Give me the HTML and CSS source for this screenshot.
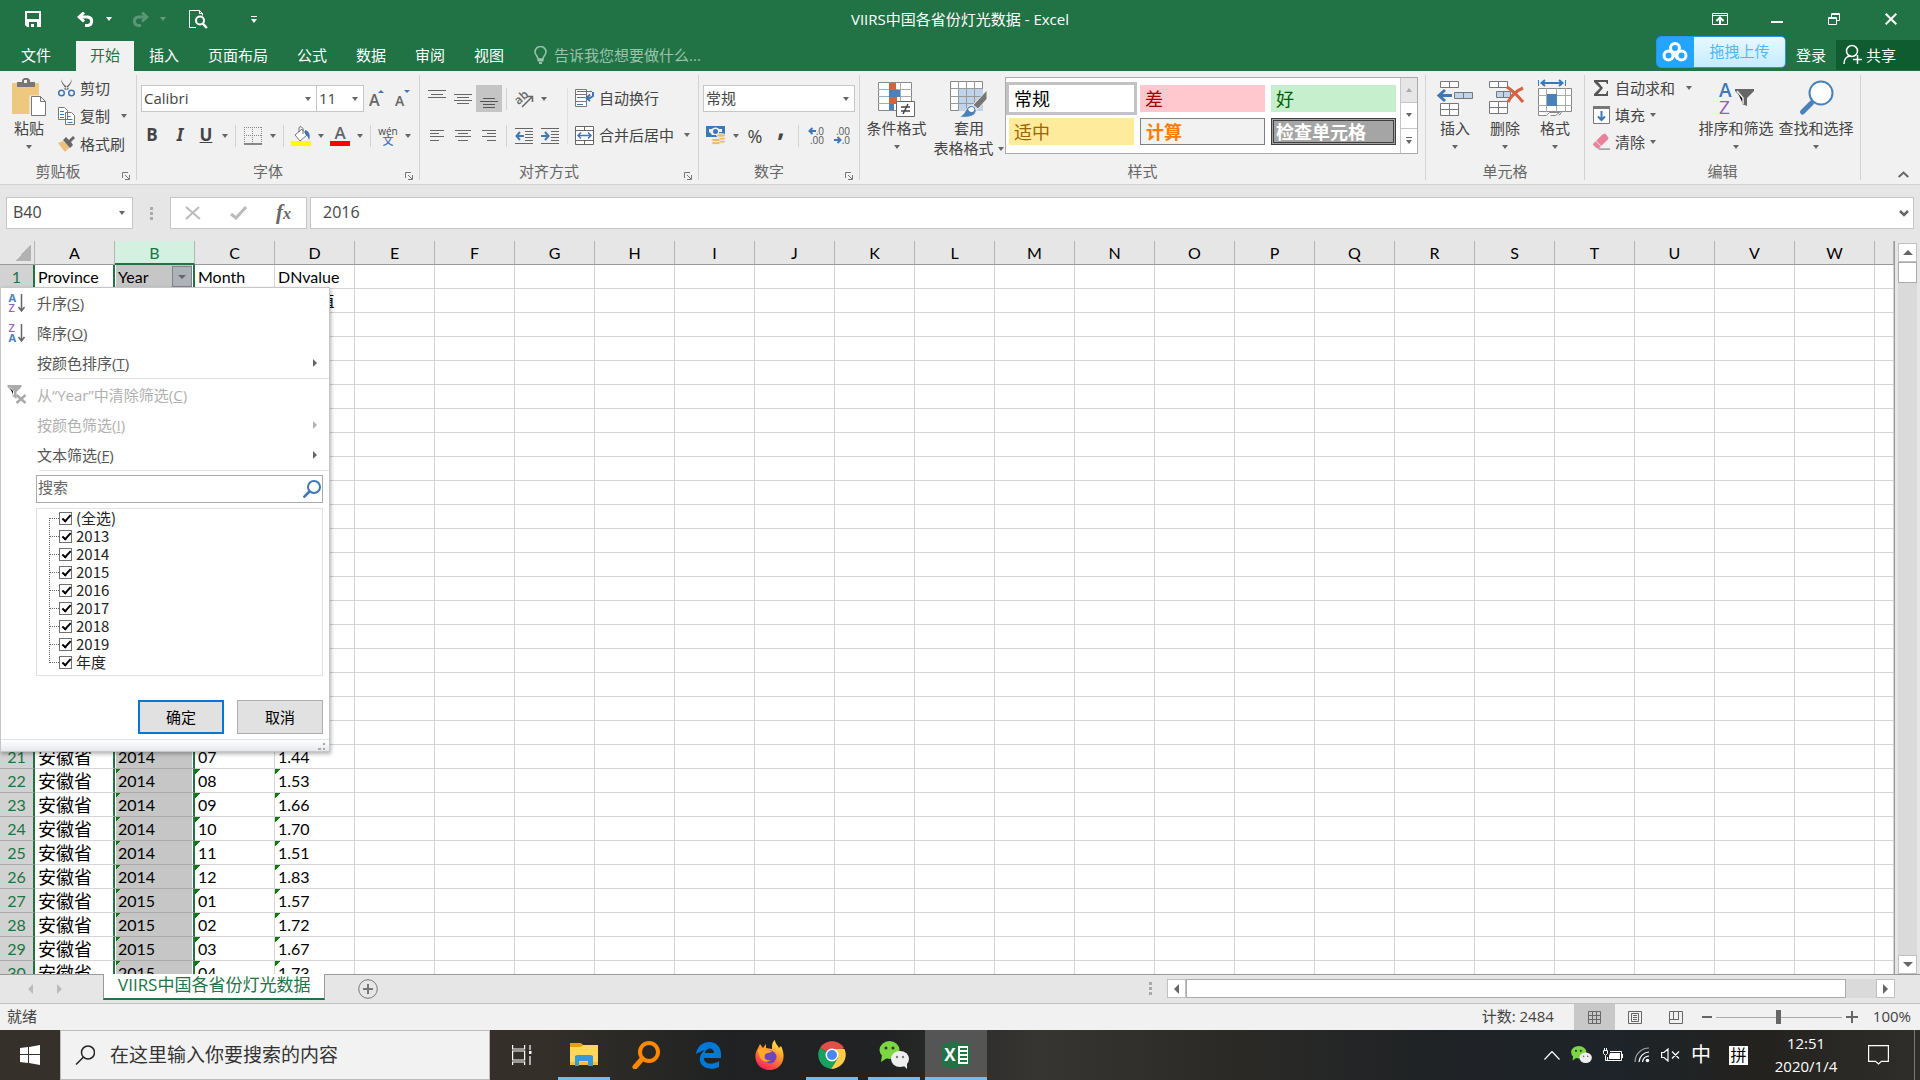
FILE: index.html
```html
<!DOCTYPE html>
<html lang="zh-CN">
<head>
    <meta charset="UTF-8">
    <meta name="viewport" content="width=device-width, initial-scale=1.0">
    <title>VIIRS中国各省份灯光数据 - Excel</title>
    <link rel="stylesheet" href="styles.css">
</head>
<body>
    <header class="app-header">
        <div class="title-bar">
            <div class="quick-access">
                <button class="qa-save" aria-label="保存"><svg width="16" height="16" viewBox="0 0 16 16"><path fill="#fff" fill-rule="evenodd" d="M0 0h16v16H2l-2-2zM2 2v6h12V2zM4 11v5h2v-3h3v3h3v-5z"/></svg></button>
                <button class="qa-undo" aria-label="撤消"><svg width="18" height="15" viewBox="0 0 18 15"><path fill="none" stroke="#fff" stroke-width="3" d="M2 5h9a4.300 4.300 0 0 1 0 8.500H8"/><path fill="none" stroke="#fff" stroke-width="3" d="M7 0.500 2.200 5 7 9.500"/></svg></button>
                <i class="caret light"></i>
                <button class="qa-redo" aria-label="恢复"><svg width="18" height="15" viewBox="0 0 18 15"><path fill="none" stroke="#fff" stroke-width="3" d="M16 5H7a4.300 4.300 0 0 0 0 8.500h3"/><path fill="none" stroke="#fff" stroke-width="3" d="M11 0.500 15.800 5 11 9.500"/></svg></button>
                <i class="caret light faded"></i>
                <button class="qa-preview" aria-label="打印预览"><svg width="19" height="19" viewBox="0 0 19 19"><path fill="none" stroke="#fff" d="M7 17.500H.5V.5h10l3 3v2M10.500.5v3h3"/><circle cx="11" cy="10.500" r="4" fill="none" stroke="#fff" stroke-width="2"/><path stroke="#fff" stroke-width="2.500" d="m13.800 13.500 4 4.500"/></svg></button>
                <button class="qa-more" aria-label="自定义快速访问工具栏"><svg width="6" height="7" viewBox="0 0 6 7"><path fill="#fff" d="M0 0h6v1H0zM0 3h6L3 7z"/></svg></button>
            </div>
            <h1 class="doc-title">VIIRS中国各省份灯光数据 - Excel</h1>
            <div class="window-buttons">
                <button aria-label="功能区显示选项"><svg width="16" height="12" viewBox="0 0 16 12"><path fill="none" stroke="#fff" d="M.5.5h15v11H.5zM.5 2.500h15"/><path fill="none" stroke="#fff" stroke-width="2" d="M8 11V5M4.500 8 8 4.500 11.500 8"/></svg></button>
                <button aria-label="最小化"><svg width="12" height="12" viewBox="0 0 12 12"><path fill="#fff" d="M0 8h12v2H0z"/></svg></button>
                <button aria-label="向下还原"><svg width="12" height="12" viewBox="0 0 12 12"><path fill="none" stroke="#fff" d="M.5 4.500h8v7h-8zM.5 5.500h8M3.500 4V.5h8v7H9M3.500 1.500h8"/></svg></button>
                <button aria-label="关闭"><svg width="12" height="12" viewBox="0 0 12 12"><path stroke="#fff" stroke-width="2" d="m.7.7 10.600 10.600M11.300.7.7 11.300"/></svg></button>
            </div>
        </div>
        <div class="tab-bar">
            <nav class="ribbon-tabs">
                <button class="file-tab">文件</button>
                <button class="active">开始</button>
                <button>插入</button>
                <button>页面布局</button>
                <button>公式</button>
                <button>数据</button>
                <button>审阅</button>
                <button>视图</button>
            </nav>
            <button class="tell-me"><svg width="13" height="18" viewBox="0 0 13 18"><path fill="none" stroke="#9bc3ab" stroke-width="1.500" d="M4 13c0-3-3-4-3-7a5.500 5.500 0 0 1 11 0c0 3-3 4-3 7z"/><path fill="#9bc3ab" d="M3.500 13h6v2.500h-6zM5 16h3v2H5z"/></svg>告诉我您想要做什么...</button>
            <button class="upload"><span class="upload-logo"><svg width="26" height="20" viewBox="0 0 26 20"><g fill="none" stroke="#fff" stroke-width="3"><circle cx="13" cy="6" r="4.500"/><circle cx="6.500" cy="13.500" r="4.500"/><circle cx="19.500" cy="13.500" r="4.500"/><path d="m10 10 6 7"/></g></svg></span><span class="upload-text">拖拽上传</span></button>
            <a class="login" href="#">登录</a>
            <button class="share"><svg width="20" height="21" viewBox="0 0 20 21"><g fill="none" stroke="#fff" stroke-width="1.500"><circle cx="9" cy="7" r="5.500"/><path d="M1 20c0-5 3-8 7-8M14.500 11v9M10 15.500h9"/></g></svg>共享</button>
        </div>
    </header>

    <section class="ribbon">
        <div class="group clipboard">
            <div class="group-body">
                <button class="big">
                    <svg width="36" height="40" viewBox="0 0 36 40"><path fill="#edc87e" d="M1 5h27v31H1z"/><path fill="#777" d="M6 9V4h5V2l2-2h4l2 2v2h5v5z"/><path fill="#f1f1f1" d="M13 2h3v3h-3z"/><path fill="#fff" stroke="#f1f1f1" stroke-width="3" d="M20 19h9l6 6v13H20z"/><path fill="#fff" stroke="#777" d="M20.500 18.500h9l5 5v14h-14zM29.500 18.500v5h5"/></svg>
                    <span>粘贴</span><i class="caret"></i>
                </button>
                <div class="stack">
                    <button><svg width="17" height="18" viewBox="0 0 17 18"><path fill="#666" d="M3 0c0 4 3 7 6 11l2-1C8 7 4 4 3 0zM14 0c0 4-3 7-6 11l-2-1c3-3 7-6 8-10z"/><g fill="none" stroke="#3f77b5" stroke-width="1.500"><circle cx="3.500" cy="14" r="2.800"/><circle cx="13.500" cy="14" r="2.800"/></g></svg>剪切</button>
                    <button><svg width="17" height="18" viewBox="0 0 17 18"><path fill="#fff" stroke="#777" d="M.5.5h6l3 3v9h-9zM7.500 5.500h6l3 3v9h-9z"/><path stroke="#3f77b5" d="M2 4.500h4M2 7.500h4M2 10.500h4M9.500 9.500h3M9.500 12.500h5M9.500 15.500h5"/></svg>复制 <i class="caret"></i></button>
                    <button><svg width="17" height="18" viewBox="0 0 17 18"><path fill="#edc07a" d="m0 8 5-2 7 6-5 5z"/><path fill="#666" d="m5 5 3-3 3 3 4-4 2 2-4 4 2 3-3 3z"/></svg>格式刷</button>
                </div>
            </div>
            <div class="group-label">剪贴板<svg class="launcher" width="8" height="8" viewBox="0 0 8 8"><path fill="none" stroke="#777" d="M.5 6V.5H6M3 3l4 4M7.500 3v4.500H3"/></svg></div>
        </div>

        <div class="group font">
            <div class="group-body rows">
                <div class="row">
                    <label class="combo font-name"><select aria-label="字体"><option>Calibri</option></select></label><label class="combo font-size"><select aria-label="字号"><option>11</option></select></label>
                    <button class="tool"><svg width="16" height="20" viewBox="0 0 16 20"><text x="0" y="17" font-size="16" font-weight="600" fill="#666">A</text><path fill="#3f77b5" d="M9 4h6l-3-3z"/></svg></button>
                    <button class="tool"><svg width="16" height="20" viewBox="0 0 16 20"><text x="0" y="17" font-size="14" font-weight="600" fill="#666">A</text><path fill="#3f77b5" d="M9 1h6l-3 3z"/></svg></button>
                </div>
                <div class="row">
                    <button class="tool wide bold">B</button><button class="tool wide italic">I</button><button class="tool slim underline">U</button><i class="caret cell"></i><i class="sep"></i>
                    <button class="tool"><svg width="18" height="18" viewBox="0 0 18 18"><path fill="none" stroke="#888" stroke-dasharray="1 1" d="M.5 0v17M17.500 0v17M8.500 0v17M0 .5h18M0 8.500h18"/><path stroke="#666" stroke-width="1.500" d="M0 17h18"/></svg></button><i class="caret cell"></i><i class="sep"></i>
                    <button class="tool"><svg width="20" height="20" viewBox="0 0 20 20"><path fill="#fff" stroke="#777" d="m4 9 7-6 5 6-7 6z"/><path fill="none" stroke="#777" d="M8 6V1.500L10 .5l2 2V8"/><path fill="#3f77b5" d="M14 4c4 1 6 5 4 10-1-3-2-5-4-6z"/><path fill="#ff0" d="M0 15h20v5H0z"/></svg></button><i class="caret cell"></i>
                    <button class="tool"><svg width="20" height="20" viewBox="0 0 20 20"><text x="10" y="13" text-anchor="middle" font-size="17" font-weight="600" fill="#666">A</text><path fill="#f00" d="M0 15h20v5H0z"/></svg></button><i class="caret cell"></i><i class="sep"></i>
                    <button class="tool phonetic"><span>wén</span><b>文</b></button><i class="caret cell"></i>
                </div>
            </div>
            <div class="group-label">字体<svg class="launcher" width="8" height="8" viewBox="0 0 8 8"><path fill="none" stroke="#777" d="M.5 6V.5H6M3 3l4 4M7.500 3v4.500H3"/></svg></div>
        </div>

        <div class="group align">
            <div class="group-body">
                <div class="rows">
                    <div class="row">
                        <button class="tool"><svg width="18" height="18" viewBox="0 0 18 18"><path stroke="#666" d="M0 .5h18M3 4.500h12M0 7.500h18"/></svg></button><button class="tool"><svg width="18" height="18" viewBox="0 0 18 18"><path stroke="#666" d="M0 4.500h18M3 7.500h12M0 10.500h18M3 13.500h12"/></svg></button><button class="tool pressed"><svg width="18" height="18" viewBox="0 0 18 18"><path stroke="#555" d="M3 8.500h12M0 11.500h18M3 14.500h12M3 17.500h12"/></svg></button><i class="sep"></i>
                        <button class="tool"><svg width="20" height="18" viewBox="0 0 20 18"><text x="1" y="12" font-size="12" font-weight="600" fill="#666" transform="rotate(-42 7 9)">ab</text><path fill="none" stroke="#666" stroke-width="1.500" d="M8 17 18 7M13 6.500h5.500V12"/></svg></button><i class="caret cell"></i>
                    </div>
                    <div class="row">
                        <button class="tool"><svg width="14" height="12" viewBox="0 0 14 12"><path stroke="#666" d="M0 .5h14M0 3.500h9M0 6.500h14M0 10.500h9"/></svg></button><button class="tool"><svg width="16" height="12" viewBox="0 0 16 12"><path stroke="#666" d="M0 .5h16M3 3.500h10M0 6.500h16M3 10.500h10"/></svg></button><button class="tool"><svg width="14" height="12" viewBox="0 0 14 12"><path stroke="#666" d="M0 .5h14M5 3.500h9M0 6.500h14M5 10.500h9"/></svg></button><i class="sep"></i>
                        <button class="tool"><svg width="18" height="16" viewBox="0 0 18 16"><path stroke="#666" d="M0 .5h18M10 3.500h8M10 6.500h8M10 9.500h8M10 12.500h8M0 15.500h18"/><path fill="none" stroke="#3f77b5" stroke-width="2" d="M9 8H1.500M5 4 1.500 8 5 12"/></svg></button><button class="tool"><svg width="18" height="16" viewBox="0 0 18 16"><path stroke="#666" d="M0 .5h18M10 3.500h8M10 6.500h8M10 9.500h8M10 12.500h8M0 15.500h18"/><path fill="none" stroke="#3f77b5" stroke-width="2" d="M0 8h7.500M4 4l3.500 4L4 12"/></svg></button>
                    </div>
                </div>
                <i class="long-sep"></i>
                <div class="rows merge">
                    <button class="row"><svg width="19" height="18" viewBox="0 0 19 18"><path fill="#fff" stroke="#777" d="M.5.5h11v17H.5zM.5 5.500h11M.5 12.500h11"/><path fill="none" stroke="#3f77b5" d="M2 2.500h15M2 8.500h8M2 15.500h6"/><path fill="none" stroke="#3f77b5" stroke-width="2" d="M18 3v4l-3 2h-3M15 5.500 11.500 9l3.500 3"/></svg>自动换行</button>
                    <button class="row"><svg width="19" height="19" viewBox="0 0 19 19"><path fill="#fff" stroke="#666" d="M.5.5h18v18H.5zM.5 4.500h18M.5 14.500h18M9.500.5v4M9.500 14.500v4"/><path fill="none" stroke="#3f77b5" stroke-width="1.500" d="M3 9.500h13M6 6.500l-3 3 3 3M13 6.500l3 3-3 3"/></svg>合并后居中 <i class="caret"></i></button>
                </div>
            </div>
            <div class="group-label">对齐方式<svg class="launcher" width="8" height="8" viewBox="0 0 8 8"><path fill="none" stroke="#777" d="M.5 6V.5H6M3 3l4 4M7.500 3v4.500H3"/></svg></div>
        </div>

        <div class="group number">
            <div class="group-body rows">
                <label class="combo"><select aria-label="数字格式"><option>常规</option></select></label>
                <div class="row">
                    <button class="tool"><svg width="20" height="19" viewBox="0 0 20 19"><path fill="#3f77b5" d="M0 0h19v11H0z"/><path fill="#f1f1f1" d="M3 3h3c2-2 5-2 7 0h3v3h-3v3H6c-1-2-3-3-3-3z"/><circle cx="9.500" cy="5.500" r="2.500" fill="#3f77b5"/><g fill="#edb96a" stroke="#f1f1f1"><ellipse cx="15" cy="15.500" rx="4.500" ry="1.800"/><ellipse cx="15" cy="12.500" rx="4.500" ry="1.800"/><ellipse cx="15" cy="9.500" rx="4.500" ry="1.800"/><ellipse cx="10" cy="17" rx="4.500" ry="1.800"/><ellipse cx="10" cy="14" rx="4.500" ry="1.800"/></g></svg></button><i class="caret cell"></i>
                    <button class="tool percent">%</button><button class="tool comma">,</button><i class="sep"></i>
                    <button class="tool"><svg width="16" height="17" viewBox="0 0 16 17"><path fill="none" stroke="#3f77b5" stroke-width="2" d="M8 4H2M4.500 1 1.500 4l3 3"/><text x="16" y="8" text-anchor="end" font-size="10" fill="#555">.0</text><text x="16" y="17" text-anchor="end" font-size="10" fill="#555">.00</text></svg></button><button class="tool"><svg width="16" height="17" viewBox="0 0 16 17"><text x="16" y="8" text-anchor="end" font-size="10" fill="#555">.00</text><text x="16" y="17" text-anchor="end" font-size="10" fill="#555">.0</text><path fill="none" stroke="#3f77b5" stroke-width="2" d="M0 13h6M3.500 10l3 3-3 3"/></svg></button>
                </div>
            </div>
            <div class="group-label">数字<svg class="launcher" width="8" height="8" viewBox="0 0 8 8"><path fill="none" stroke="#777" d="M.5 6V.5H6M3 3l4 4M7.500 3v4.500H3"/></svg></div>
        </div>

        <div class="group styles">
            <div class="group-body">
                <button class="big cond">
                    <svg width="37" height="40" viewBox="0 0 37 40"><path fill="#fff" stroke="#888" d="M.5 4.500h33v28H.5z"/><path stroke="#aaa" d="M0 11.500h34M0 18.500h34M0 25.500h34M11.500 4v28M22.500 4v28"/><path fill="#d8613f" d="M11 5h7v7h-7zM11 19h8v7h-8z"/><path fill="#4a81b9" d="M11 12h11v7H11zM11 26h5v6h-5z"/><path fill="#fff" stroke="#666" d="M18.500 23.500h18v15h-18z"/><path stroke="#444" stroke-width="1.500" d="M23 29h9M23 33h9M30 26l-5 10"/></svg>
                    <span>条件格式</span><i class="caret"></i>
                </button>
                <button class="big table-format">
                    <svg width="38" height="40" viewBox="0 0 38 40"><path fill="#fff" stroke="#888" d="M.5 3.500h32v29H.5z"/><path fill="#bfd3ea" d="M8 11h25v22H8z"/><path stroke="#999" d="M0 10.500h33M0 18.500h33M0 25.500h33M8.500 3v30M16.500 3v30M24.500 3v30"/><path fill="#777" stroke="#f1f1f1" d="M37 12v9L28 31l-5-4z"/><path fill="#4a81b9" stroke="#f1f1f1" d="M9 39c6-2 6-8 10-11 4-2 8 2 7 6-2 5-9 6-17 5z"/><path fill="#fff" d="M18 31c4-4 7-1 6 2-2 2-5 1-6-2z"/></svg>
                    <span>套用</span><span>表格格式 <i class="caret"></i></span>
                </button>
                <div class="gallery">
                    <div class="gallery-grid">
                        <button class="style-normal">常规</button><button class="style-bad">差</button><button class="style-good">好</button>
                        <button class="style-neutral">适中</button><button class="style-calc">计算</button><button class="style-check">检查单元格</button>
                    </div>
                    <div class="gallery-scroll">
                        <button class="off" aria-label="上一行"><i class="caret up"></i></button>
                        <button aria-label="下一行"><i class="caret"></i></button>
                        <button class="more" aria-label="其他"><i class="caret"></i></button>
                    </div>
                </div>
            </div>
            <div class="group-label">样式</div>
        </div>

        <div class="group cells">
            <div class="group-body">
                <button class="big">
                    <svg width="37" height="40" viewBox="0 0 37 40"><path fill="#fff" stroke="#777" d="M3.500 3.500h18v6h-18zM12.500 3.500v6M3.500 25.500h18v12h-18zM12.500 25.500v12M3.500 31.500h18"/><path fill="#bfd3ea" stroke="#777" d="M17.500 14.500h18v6h-18zM26.500 14.500v6"/><path fill="none" stroke="#3f77b5" stroke-width="3" d="M15 17.500H3M8 12l-6 5.500L8 23"/></svg>
                    <span>插入</span><i class="caret"></i>
                </button>
                <button class="big">
                    <svg width="37" height="40" viewBox="0 0 37 40"><path fill="#fff" stroke="#777" d="M2.500 3.500h18v6h-18zM11.500 3.500v6M2.500 23.500h18v12h-18zM11.500 23.500v12M2.500 29.500h18"/><path fill="#bfd3ea" stroke="#777" d="M9.500 13.500h14v6h-14zM16.500 13.500v6"/><path fill="none" stroke="#d8613f" stroke-width="3" d="M20 9c5 3 10 8 16 15M36 10c-7 3-12 8-15 14"/></svg>
                    <span>删除</span><i class="caret"></i>
                </button>
                <button class="big">
                    <svg width="37" height="40" viewBox="0 0 37 40"><path fill="#fff" stroke="#888" d="M1.500 10.500h33v23h-33z"/><path stroke="#aaa" d="M1 17.500h34M1 27.500h34M9.500 10v24M19.500 10v24M28.500 10v24"/><path fill="#4a81b9" d="M10 16h10v12H10z"/><path fill="#fff" stroke="#888" d="M1.500 33.500v4h8l3-3h10l-4 3h-5M22 37.500l3-4"/><path fill="none" stroke="#3f77b5" d="M1.500 2v6M28.500 2v6"/><path fill="none" stroke="#3f77b5" stroke-width="2" d="M5 5h20M8 2 4.500 5 8 8M22 2l3.500 3L22 8"/></svg>
                    <span>格式</span><i class="caret"></i>
                </button>
            </div>
            <div class="group-label">单元格</div>
        </div>

        <div class="group editing">
            <div class="group-body">
                <div class="stack">
                    <button><svg width="17" height="18" viewBox="0 0 17 18"><path fill="#555" d="M1 1h14v4h-1l-1-2H5l5 6-5 6h8l1-3h1v5H1v-2l6-6-6-6z"/></svg>自动求和 <i class="caret"></i></button>
                    <button><svg width="17" height="18" viewBox="0 0 17 18"><path fill="#fff" stroke="#777" d="M.5.5h16v17H.5z"/><path fill="#777" d="M0 0h17v3H0z"/><path fill="none" stroke="#3f77b5" stroke-width="2" d="M8.500 5v9M5 10.500 8.500 14 12 10.500"/></svg>填充<i class="caret"></i></button>
                    <button><svg width="18" height="18" viewBox="0 0 18 18"><path fill="#e8839b" d="M0 11 10 1l3-1 3 4v2L6 16H4l-4-4z"/><path stroke="#f1f1f1" d="m3 8 6 6"/><path stroke="#666" d="M6 16.500h12"/></svg>清除<i class="caret"></i></button>
                </div>
                <button class="big find">
                    <svg width="37" height="40" viewBox="0 0 37 40"><text x="1" y="19" font-size="19" font-weight="600" fill="#3f77b5">A</text><text x="1" y="36" font-size="19" font-weight="500" fill="#955fb5">Z</text><path fill="#666" d="M17 11h19v2l-7 7v8l-5-2v-6l-7-7z"/><path stroke="#f1f1f1" stroke-width="1.500" d="m19 13 6 7v6"/></svg>
                    <span>排序和筛选</span><i class="caret"></i>
                </button>
                <button class="big find">
                    <svg width="37" height="40" viewBox="0 0 37 40"><circle cx="23" cy="15" r="11.500" fill="#fff" stroke="#4a81b9" stroke-width="2"/><path stroke="#4a81b9" stroke-width="5" stroke-linecap="round" d="m13.500 25-9 9"/></svg>
                    <span>查找和选择</span><i class="caret"></i>
                </button>
            </div>
            <div class="group-label">编辑</div>
        </div>
        <button class="collapse" aria-label="折叠功能区"><svg width="11" height="7" viewBox="0 0 11 7"><path fill="none" stroke="#666" stroke-width="2" d="M.7 6 5.500 1.500 10.300 6"/></svg></button>
    </section>

    <section class="formula-bar">
        <label class="combo name-box"><input type="text" value="B40" aria-label="名称框"></label>
        <i class="dots"></i>
        <div class="formula-actions">
            <button aria-label="取消输入"><svg width="16" height="14" viewBox="0 0 16 14"><path stroke="#bbb" stroke-width="2" d="m1 1 14 12M14 1 1 13"/></svg></button>
            <button aria-label="输入"><svg width="18" height="14" viewBox="0 0 18 14"><path fill="none" stroke="#bbb" stroke-width="3" d="m1 8 5 4L16 1"/></svg></button>
            <button class="fx" aria-label="插入函数">f<small>x</small></button>
        </div>
        <div class="formula-field">
            <input type="text" value="2016" aria-label="编辑栏">
            <svg width="10" height="7" viewBox="0 0 10 7"><path fill="none" stroke="#666" stroke-width="2.500" d="m1 1 4 4 4-4"/></svg>
        </div>
    </section>

    <main class="workspace">
        <div class="grid">
            <table id="sheet">
                <colgroup><col class="num-col"></colgroup>
                <thead><tr></tr></thead>
                <tbody></tbody>
            </table>
        </div>
        <div class="v-scroll">
            <button aria-label="向上滚动"><i class="caret up big-caret"></i></button>
            <span class="thumb"></span>
            <button class="end" aria-label="向下滚动"><i class="caret big-caret"></i></button>
        </div>

        <form class="filter-menu">
            <button type="button" class="item"><svg width="17" height="20" viewBox="0 0 17 20"><text x="0" y="9" font-size="11" font-weight="700" fill="#4a81b9">A</text><text x="0" y="19" font-size="11" font-weight="600" fill="#955fb5">Z</text><path fill="none" stroke="#666" stroke-width="1.500" d="M13 1v17M10 14l3 4 3-4"/></svg><span>升序(<u>S</u>)</span></button>
            <button type="button" class="item"><svg width="17" height="20" viewBox="0 0 17 20"><text x="0" y="9" font-size="11" font-weight="600" fill="#955fb5">Z</text><text x="0" y="19" font-size="11" font-weight="700" fill="#4a81b9">A</text><path fill="none" stroke="#666" stroke-width="1.500" d="M13 1v17M10 14l3 4 3-4"/></svg><span>降序(<u>O</u>)</span></button>
            <button type="button" class="item sub"><span>按颜色排序(<u>T</u>)</span></button>
            <hr>
            <button type="button" class="item" disabled><svg width="19" height="19" viewBox="0 0 19 19"><path fill="#aaa" d="M0 0h14v2L9 7v7l-4-3V7L0 2z"/><path stroke="#fff" d="m2 2 4 4v4"/><path stroke="#aaa" stroke-width="2.500" d="m9 10 9 8M18 10l-9 8"/></svg><span>从“Year”中清除筛选(<u>C</u>)</span></button>
            <button type="button" class="item sub" disabled><span>按颜色筛选(<u>I</u>)</span></button>
            <button type="button" class="item sub"><span>文本筛选(<u>F</u>)</span></button>
            <hr>
            <label class="filter-search">
                <input type="text" placeholder="搜索" aria-label="搜索">
                <svg width="18" height="18" viewBox="0 0 18 18"><circle cx="11" cy="7" r="6" fill="none" stroke="#3f77b5" stroke-width="2"/><path stroke="#3f77b5" stroke-width="2.500" d="m6.500 11.500-6 6"/></svg>
            </label>
            <ul class="filter-values">
                <li><label><input type="checkbox" checked>(全选)</label></li>
                <li><label><input type="checkbox" checked>2013</label></li>
                <li><label><input type="checkbox" checked>2014</label></li>
                <li><label><input type="checkbox" checked>2015</label></li>
                <li><label><input type="checkbox" checked>2016</label></li>
                <li><label><input type="checkbox" checked>2017</label></li>
                <li><label><input type="checkbox" checked>2018</label></li>
                <li><label><input type="checkbox" checked>2019</label></li>
                <li><label><input type="checkbox" checked>年度</label></li>
            </ul>
            <div class="filter-buttons">
                <button type="button" class="ok">确定</button>
                <button type="button">取消</button>
            </div>
            <div class="resize-bar"><svg width="8" height="8" viewBox="0 0 8 8"><path fill="#aaa" d="M5 0h2v2H5zM0 5h3v2H0zM5 5h2v2H5z"/></svg></div>
        </form>
    </main>

    <section class="sheet-bar">
        <div class="sheet-nav">
            <button aria-label="上一个工作表"><svg width="5" height="10" viewBox="0 0 5 10"><path fill="#bbb" d="M5 0v10L0 5z"/></svg></button>
            <button aria-label="下一个工作表"><svg width="5" height="10" viewBox="0 0 5 10"><path fill="#bbb" d="M0 0v10l5-5z"/></svg></button>
        </div>
        <button class="sheet-tab">VIIRS中国各省份灯光数据</button>
        <button class="add-sheet" aria-label="新工作表"><svg width="20" height="20" viewBox="0 0 20 20"><circle cx="10" cy="10" r="9.300" fill="none" stroke="#777"/><path stroke="#777" stroke-width="2" d="M10 5v10M5 10h10"/></svg></button>
        <i class="dots"></i>
        <div class="h-scroll">
            <button aria-label="向左滚动"><svg width="5" height="10" viewBox="0 0 5 10"><path fill="#666" d="M5 0v10L0 5z"/></svg></button>
            <span class="thumb"></span>
            <button class="end" aria-label="向右滚动"><svg width="5" height="10" viewBox="0 0 5 10"><path fill="#666" d="M0 0v10l5-5z"/></svg></button>
        </div>
    </section>

    <section class="status-bar">
        <span class="ready">就绪</span>
        <span class="count">计数: 2484</span>
        <button class="view active" aria-label="普通"><svg width="13" height="13" viewBox="0 0 13 13"><path fill="none" stroke="#666" d="M.5.5h12v12H.5zM4.500 0v13M8.500 0v13M0 4.500h13M0 8.500h13"/></svg></button>
        <button class="view" aria-label="页面布局"><svg width="14" height="13" viewBox="0 0 14 13"><path fill="none" stroke="#666" d="M.5.5h13v12H.5zM3.500 2.500h7v8h-7zM5 4.500h4M5 6.500h4M5 8.500h4"/></svg></button>
        <button class="view" aria-label="分页预览"><svg width="14" height="13" viewBox="0 0 14 13"><path fill="none" stroke="#666" d="M.5.5h13v12H.5zM4.500 0v8M9.500 0v8M0 8.500h10"/></svg></button>
        <div class="zoom">
            <button aria-label="缩小"><svg width="10" height="12" viewBox="0 0 10 12"><path stroke="#666" stroke-width="2" d="M0 6h10"/></svg></button>
            <input type="range" min="0" max="200" value="100" aria-label="显示比例">
            <button aria-label="放大"><svg width="12" height="12" viewBox="0 0 12 12"><path stroke="#666" stroke-width="2" d="M0 6h12M6 0v12"/></svg></button>
        </div>
        <span class="percent-text">100%</span>
    </section>

    <footer class="taskbar">
        <button class="start" aria-label="开始"><svg width="20" height="20" viewBox="0 0 20 20"><path fill="#fff" d="M0 3l8-1v7H0zM9 2l11-2v9H9zM0 10h8v8l-8-1zM9 10h11v10L9 18z"/></svg></button>
        <label class="task-search">
            <svg width="20" height="20" viewBox="0 0 20 20"><circle cx="13" cy="7.500" r="6.500" fill="none" stroke="#222" stroke-width="1.500"/><path stroke="#222" stroke-width="1.500" d="M8.500 12 1 19.500"/></svg>
            <input type="text" placeholder="在这里输入你要搜索的内容" aria-label="在这里输入你要搜索的内容">
        </label>
        <nav class="task-apps">
            <button aria-label="任务视图"><svg width="20" height="20" viewBox="0 0 20 20"><path fill="none" stroke="#fff" stroke-width="1.200" d="M.6 0v4h12V0M.6 6h12v9H.6zM.6 20v-3h12v3M18 0v5M18 11v9"/><path fill="#fff" d="M17 6h2.500v3H17z"/></svg></button>
            <button class="running" aria-label="文件资源管理器"><svg width="28" height="24" viewBox="0 0 28 24"><path fill="#e2a30c" d="M0 0h11l2 2v6H0z"/><path fill="#ffd55e" d="M0 4h11l2-2h15v20H0z"/><path fill="#f5bd3c" d="M0 19h28v3H0z"/><path fill="#3a95dc" d="M5 23V13l2-1h14l2 1v10h-5v-5H9v5z"/></svg></button>
            <button aria-label="搜索"><svg width="28" height="28" viewBox="0 0 28 28"><circle cx="17" cy="11" r="9" fill="none" stroke="#f80" stroke-width="4"/><path stroke="#f80" stroke-width="5" stroke-linecap="round" d="m10 18-7 8"/></svg></button>
            <button aria-label="Edge"><svg width="25" height="27" viewBox="0 0 25 27"><path fill="#0078d7" d="M0 12C1 4 7 0 13 0c8 0 12 6 12 12v4H8c0 7 9 7 15 3v6c-6 3-12 2-16-1-5-4-4-12 2-16-3 1-6 2-9 4zM9 11h9c0-6-8-6-9 0z"/></svg></button>
            <button aria-label="Firefox"><svg width="30" height="30" viewBox="0 0 30 30"><defs><linearGradient id="flame" x1=".8" y1="0" x2=".3" y2="1"><stop offset="0" stop-color="#fff34f"/><stop offset=".45" stop-color="#ff9328"/><stop offset="1" stop-color="#ff1f59"/></linearGradient></defs><path fill="url(#flame)" d="M3 8 5 4l3 4 3-4v4l6 1c0-4 0-7 3-9 0 4 3 5 4 8l2-2c6 12 1 23-10 24C4 31-4 19 3 8z"/><circle cx="15" cy="17" r="6.500" fill="#7341c8"/><path fill="#ffab25" d="m3 9 5-1 3 2 6 1c-2 3-6 1-7 4-2 5 3 6 6 5-7 5-13-2-13-11z"/></svg></button>
            <button class="running" aria-label="Chrome"><svg width="28" height="28" viewBox="0 0 28 28"><path fill="#df5146" d="M14 14 2 7C7-2 21-2 26 7z"/><path fill="#19a15f" d="M14 14 2 7c-5 9 1 20 11 21l7-11z"/><path fill="#ffcd46" d="M14 8h12.500C31 18 23 28 13 28l7-11z"/><circle cx="14" cy="14" r="6.500" fill="#fff"/><circle cx="14" cy="14" r="5" fill="#4688f1"/></svg></button>
            <button class="running" aria-label="微信"><svg width="30" height="28" viewBox="0 0 30 28"><ellipse cx="10.500" cy="9" rx="10" ry="9" fill="#7bd642"/><path fill="#7bd642" d="m3 14-1 7 6-4z"/><circle cx="7" cy="7" r="1.500" fill="#333"/><circle cx="14" cy="7" r="1.500" fill="#333"/><ellipse cx="21" cy="18" rx="9" ry="8" fill="#eee"/><path fill="#eee" d="m24 24 4 4v-6z"/><circle cx="18" cy="16" r="1.200" fill="#777"/><circle cx="24" cy="16" r="1.200" fill="#777"/></svg></button>
            <button class="running current" aria-label="Excel"><svg width="28" height="28" viewBox="0 0 28 28"><path fill="#fff" stroke="#217346" stroke-width="2" d="M12 4h15v20H12z"/><path stroke="#217346" stroke-width="2" d="M18 8h7M18 12h7M18 16h7M18 20h7"/><path fill="#217346" d="m0 3 16-3v28L0 25z"/><text x="8" y="20" text-anchor="middle" font-size="17" font-weight="700" fill="#fff">X</text></svg></button>
        </nav>
        <div class="tray">
            <svg width="16" height="9" viewBox="0 0 16 9"><path fill="none" stroke="#fff" stroke-width="1.200" d="m.5 8.500 7.500-8 7.500 8"/></svg>
            <svg width="21" height="18" viewBox="0 0 30 26"><ellipse cx="11" cy="9" rx="11" ry="9" fill="#7bd642"/><path fill="#7bd642" d="m3 14-1 7 6-4z"/><circle cx="7" cy="7" r="1.500" fill="#333"/><circle cx="14" cy="7" r="1.500" fill="#333"/><ellipse cx="21" cy="17" rx="9" ry="7.500" fill="#eee"/><circle cx="18" cy="15" r="1.200" fill="#777"/><circle cx="24" cy="15" r="1.200" fill="#777"/></svg>
            <svg width="20" height="14" viewBox="0 0 20 14"><path fill="none" stroke="#fff" d="M7 3.500h11.500v9h-14V9M19.500 6v4M.5 2.500h4v3l-2 2-2-2zM1.500 0v2M3.500 0v2M2.500 8v4.500h3"/><path fill="#fff" d="M7 5h10v6H6V8z"/></svg>
            <svg width="16" height="16" viewBox="0 0 16 16"><g fill="none" stroke="#fff" stroke-width="1.200"><path d="M1 15A14 14 0 0 1 15 1" opacity=".6"/><path d="M5 15A10.500 10.500 0 0 1 15 5M8.500 15A7 7 0 0 1 15 9"/></g><circle cx="13.500" cy="13.500" r="1.800" fill="#fff"/></svg>
            <svg width="19" height="14" viewBox="0 0 19 14"><path fill="none" stroke="#fff" stroke-width="1.200" d="M.6 4.500H3L7 1v12L3 9.500H.6zM11 3.500l7 7M18 3.500l-7 7"/></svg>
            <span class="ime">中</span>
            <span class="pinyin">拼</span>
            <div class="clock"><span>12:51</span><span>2020/1/4</span></div>
            <svg class="notice" width="22" height="20" viewBox="0 0 22 20"><path fill="none" stroke="#fff" stroke-width="1.200" d="M.6.6h19.800v15.800h-7l-2.900 2.500-2.900-2.500h-7z"/></svg>
        </div>
    </footer>
    <script src="sheet.js"></script>
</body>
</html>
```
FILE: styles.css
```css
* {
    box-sizing: border-box;
}

body {
    margin: 0;
    height: 100vh;
    display: flex;
    flex-direction: column;
    overflow: hidden;
    background-color: #e6e6e6;
    color: #444;
    font-family: "Open Sans", "Noto Sans CJK SC", sans-serif;
    font-size: 15px;
    line-height: 20px;
}

button,
input,
select {
    margin: 0;
    padding: 0;
    border: 0;
    border-radius: 0;
    background: none;
    color: inherit;
    font: inherit;
    outline: none;
}

svg {
    display: block;
    flex: none;
}

button {
    white-space: nowrap;
}

.caret {
    flex: none;
    display: inline-block;
    width: 0;
    height: 0;
    border: 3px solid transparent;
    border-top: 4px solid #666;
    border-bottom: 0;
}

.caret.up {
    border-top: 0;
    border-bottom: 4px solid #aaa;
}

.caret.light {
    border-top-color: #fff;
}

.caret.faded {
    opacity: 0.3;
}

.caret.cell {
    margin: 0 3px 0 4px;
}

.caret.big-caret {
    border-width: 5px;
    border-top-color: #666;
    border-bottom-width: 0;
}

.caret.up.big-caret {
    border-top-width: 0;
    border-bottom: 5px solid #666;
}

.dots {
    flex: none;
    width: 3px;
    height: 13px;
    background: repeating-linear-gradient(#aaa 0 3px, transparent 3px 5px);
}

/* title bar and tabs */
.app-header {
    flex: none;
    background-color: #217346;
    color: #fff;
}

.title-bar {
    display: grid;
    grid-template-columns: 1fr auto 1fr;
    align-items: center;
    height: 38px;
}

.quick-access {
    display: flex;
    align-items: center;
    padding-left: 25px;
}

.qa-undo {
    margin: 0 11px 0 36px;
}

.qa-redo {
    margin: 0 11px 0 19px;
    opacity: 0.25;
}

.qa-preview {
    margin: 0 43px 0 23px;
}

.doc-title {
    margin: 0;
    font-size: 15px;
    font-weight: 400;
}

.window-buttons {
    display: flex;
    justify-content: flex-end;
    padding-right: 1px;
}

.window-buttons button {
    display: flex;
    justify-content: center;
    width: 57px;
}

.tab-bar {
    display: flex;
    align-items: center;
    height: 33px;
}

.ribbon-tabs {
    display: flex;
    gap: 1px;
    height: 30px;
    margin-top: 3px;
}

.ribbon-tabs button {
    padding: 0 14px 3px;
}

.ribbon-tabs .file-tab {
    width: 75px;
    padding: 0 24px 2px 21px;
}

.ribbon-tabs .active {
    background-color: #f1f1f1;
    color: #217346;
}

.tell-me {
    display: flex;
    align-items: center;
    gap: 7px;
    margin-left: 16px;
    margin-right: auto;
    color: #9bc3ab;
}

.upload {
    display: flex;
    height: 32px;
    margin: 0 10px 6px 0;
    border: 1px solid #2196f3;
    border-radius: 5px;
    overflow: hidden;
}

.upload-logo {
    display: grid;
    place-items: center;
    width: 37px;
    height: 30px;
    background-color: #22a4ff;
}

.upload-text {
    width: 91px;
    line-height: 28px;
    background-image: linear-gradient(#e9f8ff, #c4ecff);
    color: #50b8fa;
}

.login {
    margin-right: 10px;
    color: #fff;
    text-decoration: none;
}

.share {
    display: flex;
    align-items: center;
    gap: 3px;
    width: 84px;
    height: 30px;
    padding-left: 7px;
    background-color: #0e5c2f;
}

/* ribbon */
.ribbon {
    flex: none;
    display: flex;
    height: 114px;
    border-bottom: 1px solid #d2d2d2;
    background-color: #f1f1f1;
}

.group {
    flex: none;
    display: flex;
    flex-direction: column;
    margin: 4px 0;
    border-right: 1px solid #d2d2d2;
}

.clipboard {
    width: 137px;
}

.font {
    width: 283px;
}

.align {
    width: 279px;
}

.number {
    width: 161px;
}

.styles {
    width: 566px;
}

.cells {
    width: 159px;
}

.editing {
    width: 276px;
}

.group-body {
    flex: none;
    display: flex;
    height: 87px;
}

.group-label {
    position: relative;
    line-height: 18px;
    text-align: center;
    color: #666;
}

.clipboard .group-label,
.font .group-label,
.align .group-label,
.number .group-label {
    padding-right: 20px;
}

.launcher {
    position: absolute;
    right: 6px;
    bottom: 0;
}

.rows {
    display: flex;
    flex-direction: column;
    gap: 10px;
    padding-top: 10px;
}

.row {
    display: flex;
    align-items: center;
    height: 27px;
}

.rows.group-body,
.align .rows {
    padding-left: 4px;
}

.font .row:last-child {
    margin-left: -3px;
}

.sep {
    flex: none;
    width: 1px;
    height: 22px;
    margin: 0 4px;
    background-color: #d2d2d2;
}

.long-sep {
    width: 1px;
    height: 56px;
    margin: 13px 0 0 4px;
    background-color: #e0e0e0;
}

.tool {
    display: flex;
    align-items: center;
    justify-content: center;
    width: 26px;
    height: 27px;
}

.tool.wide {
    width: 28px;
}

.tool.slim {
    width: 24px;
}

.tool.pressed {
    background-color: #c5c5c5;
}

.bold,
.italic,
.underline {
    padding-bottom: 1px;
    font-size: 17px;
    font-weight: 700;
}

.italic {
    font-family: "Noto Sans", sans-serif;
    font-style: italic;
}

.underline {
    text-decoration: underline;
}

.phonetic {
    flex-direction: column;
    font-size: 10px;
    line-height: 9px;
}

.phonetic b {
    color: #3f77b5;
    font-size: 11px;
    font-weight: 500;
}

.percent {
    font-size: 18px;
}

.comma {
    padding-bottom: 18px;
    font-size: 26px;
    font-weight: 700;
}

.combo {
    position: relative;
    display: block;
    height: 27px;
    border: 1px solid #c6c6c6;
    background-color: #fff;
}

.combo::after {
    content: "";
    position: absolute;
    right: 5px;
    top: 50%;
    margin-top: -2px;
    border: 3px solid transparent;
    border-top: 4px solid #666;
    border-bottom: 0;
}

.combo select,
.combo input {
    width: 100%;
    height: 100%;
    padding: 0 0 2px 2px;
    appearance: none;
}

.font-name {
    width: 176px;
}

.font-size {
    width: 47px;
    border-left-width: 0;
}

.number .combo {
    width: 152px;
}

.align .merge {
    padding-left: 7px;
}

.merge button {
    gap: 5px;
    padding-bottom: 1px;
}

.merge .caret {
    margin-left: 5px;
}

.big {
    display: flex;
    flex-direction: column;
    align-items: center;
    width: 50px;
}

.big svg {
    margin-top: 3px;
}

.big > .caret {
    margin-top: 7px;
}

.clipboard .big {
    width: 58px;
}

.stack {
    display: flex;
    flex-direction: column;
}

.stack button {
    display: flex;
    align-items: center;
    gap: 5px;
    height: 28px;
    padding-bottom: 2px;
}

.clipboard .stack .caret {
    margin-left: 6px;
}

.big.cond {
    width: 73px;
}

.big.table-format {
    width: 72px;
}

.table-format .caret {
    margin: 0 0 3px 1px;
}

.gallery {
    display: flex;
    height: 77px;
    margin-top: 2px;
    border: 1px solid #ababab;
    background-color: #fff;
}

.gallery-grid {
    display: grid;
    grid-template-columns: repeat(3, 125px);
    grid-auto-rows: 27px;
    gap: 6px;
    padding: 7px 4px 7px 3px;
}

.gallery-grid button {
    padding-left: 5px;
    font-size: 18px;
    line-height: 22px;
    text-align: left;
}

.style-normal {
    box-shadow: 0 0 0 3px #c3c3c3;
    color: #000;
}

.style-bad {
    background-color: #ffc7ce;
    color: #9c0006;
}

.style-good {
    background-color: #c6efce;
    color: #006100;
}

.style-neutral {
    background-color: #ffeb9c;
    color: #9c6500;
}

.style-calc {
    border: 1px solid #7f7f7f;
    background-color: #f2f2f2;
    color: #fa7d00;
    font-weight: 700;
}

.style-check {
    border: 3px double #3f3f3f;
    background-color: #a5a5a5;
    color: #fff;
    font-weight: 700;
}

.gallery-grid .style-check {
    padding-left: 2px;
    line-height: 18px;
}

.gallery-scroll {
    display: flex;
    flex-direction: column;
    width: 17px;
    border-left: 1px solid #c6c6c6;
}

.gallery-scroll button {
    display: flex;
    flex-direction: column;
    flex: 1;
    align-items: center;
    justify-content: center;
}

.gallery-scroll button + button {
    border-top: 1px solid #c6c6c6;
}

.gallery-scroll .off {
    background-color: #e6e6e6;
}

.gallery-scroll .more::before {
    content: "";
    width: 6px;
    height: 1px;
    margin-bottom: 2px;
    background-color: #666;
}

.cells .group-body {
    padding-left: 4px;
}

.editing .group-body {
    padding-left: 8px;
}

.editing .stack {
    width: 103px;
}

.editing .stack button {
    height: 27px;
}

.editing .stack svg {
    width: 17px;
}

.editing .stack button:first-child .caret {
    margin-left: 6px;
}

.big.find {
    width: 80px;
}

.collapse {
    align-self: flex-end;
    margin: 0 11px 6px auto;
}

/* formula bar */
.formula-bar {
    flex: none;
    display: flex;
    align-items: center;
    height: 56px;
    padding: 0 6px;
}

.formula-bar input {
    font-size: 16px;
}

.name-box {
    width: 127px;
    height: 32px;
}

.name-box input {
    padding-left: 6px;
}

.name-box::after {
    right: 7px;
}

.formula-bar .dots {
    margin: 0 17px;
}

.formula-actions {
    display: flex;
    align-items: center;
    justify-content: space-between;
    width: 137px;
    height: 32px;
    margin-right: 3px;
    padding: 0 15px 0 14px;
    border: 1px solid #c6c6c6;
    background-color: #fff;
}

.fx {
    font-family: "Liberation Serif", serif;
    font-size: 21px;
    font-style: italic;
    font-weight: 700;
    color: #666;
}

.fx small {
    font-size: 16px;
}

.formula-field {
    flex: 1;
    display: flex;
    align-items: center;
    height: 32px;
    padding: 0 4px 0 12px;
    border: 1px solid #c6c6c6;
    background-color: #fff;
}

.formula-field input {
    flex: 1;
    padding-bottom: 2px;
}

/* sheet */
.workspace {
    position: relative;
    flex: 1;
    min-height: 0;
    display: flex;
    gap: 3px;
    padding-right: 3px;
}

.grid {
    flex: 1;
    overflow: hidden;
    border-right: 1px solid #999;
    background-color: #fff;
}

table {
    width: 100%;
    table-layout: fixed;
    border-collapse: separate;
    border-spacing: 0;
    color: #000;
    font-family: Lato, "Noto Sans CJK SC", sans-serif;
    font-size: 16px;
}

.num-col {
    width: 35px;
}

.data-col {
    width: 80px;
}

th,
td {
    height: 24px;
    padding: 0;
    line-height: 22px;
    white-space: nowrap;
}

td {
    padding-left: 3px;
    border-right: 1px solid #d4d4d4;
    border-bottom: 1px solid #d4d4d4;
}

thead th {
    border-right: 1px solid #b5b5b5;
    border-bottom: 1px solid #999;
    background-color: #e6e6e6;
    font-weight: 400;
}

thead .corner {
    background-image: linear-gradient(135deg, transparent 50%, #b2b2b2 50%);
    background-repeat: no-repeat;
    background-position: 15px 4px;
    background-size: 16px 16px;
}

thead .picked {
    border-bottom: 2px solid #217346;
    background-color: #d3f0e0;
    color: #217346;
    line-height: 21px;
}

tbody th {
    border-right: 2px solid #217346;
    border-bottom: 1px solid #ababab;
    background-color: #d2d2d2;
    color: #217346;
    font-weight: 400;
}

td.col-a {
    border-right: 2px solid #217346;
}

td.col-b {
    border-right: 2px solid #217346;
    border-bottom-color: #aaa;
    background-color: #c6c6c6;
    box-shadow: inset 1px 0 #fff, inset -1px 0 #fff;
}

.province {
    font-size: 18px;
}

.flagged {
    background-image: linear-gradient(135deg, #0b7a0b 4px, transparent 4px);
}

.year-head {
    display: flex;
    align-items: center;
    justify-content: space-between;
    padding-right: 1px;
}

.year-head button {
    display: grid;
    place-items: center;
    width: 20px;
    height: 21px;
    border: 1px solid #808488;
    background-color: #aeb3b9;
}

.year-head .caret {
    border-width: 4px;
    border-bottom-width: 0;
}

.v-scroll {
    display: flex;
    flex-direction: column;
    width: 19px;
    margin-top: 2px;
    background-color: #dadada;
}

.v-scroll button,
.h-scroll button {
    display: flex;
    flex: none;
    align-items: center;
    justify-content: center;
    width: 19px;
    height: 19px;
    border: 1px solid #c0c0c0;
    background-color: #fff;
}

.v-scroll .thumb {
    height: 21px;
    border: 1px solid #ababab;
    background-color: #fff;
}

.v-scroll .end {
    margin-top: auto;
}

/* filter menu, opened over the cells from the Year header */
.filter-menu {
    position: absolute;
    left: 0;
    top: 46px;
    width: 330px;
    border: 1px solid #c6c6c6;
    background-color: #fff;
    box-shadow: 1px 2px 4px rgba(0, 0, 0, 0.3);
    color: #555;
}

.filter-menu .item {
    display: flex;
    align-items: center;
    width: 100%;
    height: 30px;
    padding: 0 0 1px 6px;
}

.item svg {
    width: 20px;
    margin-right: 10px;
}

.filter-menu .sub {
    padding-left: 36px;
}

.item.sub::after {
    content: "";
    margin-left: auto;
    margin-right: 12px;
    border: 4px solid transparent;
    border-left-color: #666;
    border-right: 0;
}

.item:disabled {
    color: #b0b0b0;
}

.item.sub:disabled::after {
    border-left-color: #b0b0b0;
}

.filter-menu hr {
    height: 1px;
    margin: 0 0 1px 38px;
    border: 0;
    background-color: #e1e1e1;
}

.filter-search {
    display: flex;
    align-items: center;
    height: 28px;
    margin: 4px 6px 5px 35px;
    padding: 0 1px;
    border: 1px solid #ababab;
}

.filter-search input {
    flex: 1;
    min-width: 0;
    padding-bottom: 4px;
}

.filter-search input::placeholder {
    color: #666;
    opacity: 1;
}

.filter-values {
    position: relative;
    height: 168px;
    margin: 0 6px 24px 35px;
    padding: 0 0 0 13px;
    border: 1px solid #e1e1e1;
    list-style: none;
    color: #222;
    font-family: "Noto Sans CJK SC", sans-serif;
}

.filter-values::before {
    content: "";
    position: absolute;
    top: 9px;
    left: 12px;
    height: 145px;
    border-left: 1px dotted #666;
}

.filter-values li {
    display: flex;
    align-items: center;
    height: 18px;
}

.filter-values li::before {
    content: "";
    width: 9px;
    border-top: 1px dotted #666;
}

.filter-values label {
    display: flex;
    align-items: center;
    gap: 4px;
    line-height: 18px;
}

.filter-values input {
    width: 13px;
    height: 13px;
    border: 1px solid #707070;
    background-color: #fff;
    appearance: none;
}

.filter-values input:checked::before {
    content: "";
    display: block;
    width: 7px;
    height: 3px;
    margin: 2px;
    border: solid #000;
    border-width: 0 0 2px 2px;
    transform: rotate(-48deg);
}

.filter-buttons {
    display: flex;
    justify-content: flex-end;
    gap: 13px;
    padding: 0 6px 5px 0;
}

.filter-buttons button {
    width: 86px;
    height: 34px;
    border: 1px solid #adadad;
    background-color: #e1e1e1;
    color: #000;
}

.filter-buttons .ok {
    border: 2px solid #0078d7;
}

.resize-bar {
    display: flex;
    justify-content: flex-end;
    height: 12px;
    padding: 3px;
    border-top: 1px solid #dae3ea;
    background-image: linear-gradient(#fff, #e6e8ec);
}

/* sheet tabs */
.sheet-bar {
    flex: none;
    display: flex;
    align-items: flex-start;
    height: 30px;
    padding-right: 25px;
    border-top: 1px solid #999;
    border-bottom: 1px solid #c0c0c0;
}

.sheet-nav {
    display: flex;
    gap: 24px;
    width: 103px;
    padding: 9px 0 0 28px;
}

.sheet-tab {
    height: 26px;
    margin-top: -1px;
    padding: 0 14px 3px;
    border-left: 1px solid #999;
    border-right: 1px solid #999;
    border-bottom: 2px solid #217346;
    background-color: #fff;
    color: #217346;
    font-size: 17px;
    line-height: 20px;
}

.add-sheet {
    margin: 4px auto 0 33px;
}

.sheet-bar .dots {
    margin: 7px 15px 0 0;
}

.h-scroll {
    display: flex;
    width: 38.4%;
    margin-top: 4px;
    background-color: #dadada;
}

.h-scroll .thumb {
    flex: 1;
    margin-right: 30px;
    border: 1px solid #ababab;
    background-color: #fff;
}

/* status bar */
.status-bar {
    flex: none;
    display: flex;
    align-items: center;
    height: 26px;
    padding: 0 9px 0 7px;
    background-color: #f1f1f1;
}

.status-bar span {
    padding-bottom: 3px;
}

.ready {
    margin-right: auto;
}

.count {
    margin-right: 20px;
}

.view {
    display: grid;
    place-items: center;
    width: 41px;
    height: 26px;
}

.view.active {
    background-color: #c8c8c8;
}

.zoom {
    display: flex;
    align-items: center;
    gap: 4px;
    margin: 0 15px 0 5px;
}

.zoom input {
    width: 126px;
    height: 14px;
    background: linear-gradient(#aaa, #aaa) center / 100% 1px no-repeat;
    appearance: none;
}

.zoom input::-webkit-slider-thumb {
    width: 5px;
    height: 14px;
    background-color: #666;
    appearance: none;
}

/* taskbar */
.taskbar {
    flex: none;
    display: flex;
    height: 50px;
    background-color: #242424;
    background-image: linear-gradient(90deg, #35312a, #343029 28%, #1f2122 38%, #212223 46%, #363532 54%, #2b2a27 64%, #1f2225 75%, #1e2429 84%, #24221f 92%, #302e2b);
    color: #fff;
}

.start {
    display: grid;
    place-items: center;
    width: 60px;
}

.task-search {
    display: flex;
    align-items: center;
    gap: 15px;
    width: 430px;
    padding-left: 14px;
    border: 1px solid #bbb;
    background-color: #f2f2f2;
}

.task-search input {
    flex: 1;
    font-size: 19px;
}

.task-search input::placeholder {
    color: #333;
    opacity: 1;
}

.task-apps {
    display: flex;
    padding-left: 1px;
}

.task-apps button {
    position: relative;
    display: grid;
    place-items: center;
    width: 62px;
}

.task-apps .running::after {
    content: "";
    position: absolute;
    bottom: 0;
    width: 52px;
    height: 3px;
    background-color: #76b9ed;
}

.task-apps .current {
    background-color: #555;
}

.task-apps .current::after {
    width: 62px;
}

.tray {
    display: flex;
    align-items: center;
    gap: 11px;
    margin: 0 5px 0 auto;
    padding-right: 24px;
    border-right: 1px solid #777;
}

.ime {
    font-size: 20px;
}

.pinyin {
    margin: 0 2px 0 7px;
    width: 19px;
    height: 19px;
    background-color: #fff;
    color: #000;
    font-size: 16px;
    line-height: 18px;
    text-align: center;
}

.clock {
    display: flex;
    flex-direction: column;
    align-items: center;
    gap: 3px;
    width: 90px;
    padding-bottom: 2px;
}

.notice {
    margin-left: 6px;
}
```
FILE: sheet.js
```js
const letters = 'ABCDEFGHIJKLMNOPQRSTUVW'.split('');
const rowCount = 30;

const records = {
    21: ['安徽省', '2014', '07', '1.44'],
    22: ['安徽省', '2014', '08', '1.53'],
    23: ['安徽省', '2014', '09', '1.66'],
    24: ['安徽省', '2014', '10', '1.70'],
    25: ['安徽省', '2014', '11', '1.51'],
    26: ['安徽省', '2014', '12', '1.83'],
    27: ['安徽省', '2015', '01', '1.57'],
    28: ['安徽省', '2015', '02', '1.72'],
    29: ['安徽省', '2015', '03', '1.67'],
    30: ['安徽省', '2015', '04', '1.73']
};

const titles = {
    1: ['Province', 'Year', 'Month', 'DNvalue'],
    2: ['省份', '年度', '月份', 'DN均值']
};

const sheet = document.getElementById('sheet');
const colgroup = sheet.querySelector('colgroup');
const headRow = sheet.tHead.rows[0];
const body = sheet.tBodies[0];

function addHead(text, className) {
    const th = document.createElement('th');
    th.textContent = text;
    th.className = className;
    headRow.appendChild(th);
}

addHead('', 'corner');
letters.forEach(letter => {
    const col = document.createElement('col');
    col.className = 'data-col';
    colgroup.appendChild(col);
    addHead(letter, letter === 'B' ? 'picked' : '');
});
colgroup.appendChild(document.createElement('col'));
addHead('', '');

for (let r = 1; r <= rowCount; r++) {
    const row = body.insertRow();
    const th = document.createElement('th');
    th.textContent = r;
    row.appendChild(th);

    const values = titles[r] || records[r] || [];
    for (let c = 0; c <= letters.length; c++) {
        const cell = row.insertCell();
        cell.textContent = values[c] || '';
        if (c === 0) cell.classList.add('col-a');
        if (c === 1) cell.classList.add('col-b');
        if (r > 1 && c === 0) cell.classList.add('province');
        if (records[r] && c > 0 && c < 4) cell.classList.add('flagged');
    }
}

// the Year header carries the filter button
body.rows[0].cells[2].innerHTML =
    '<div class="year-head">Year<button aria-label="筛选"><i class="caret"></i></button></div>';
```
